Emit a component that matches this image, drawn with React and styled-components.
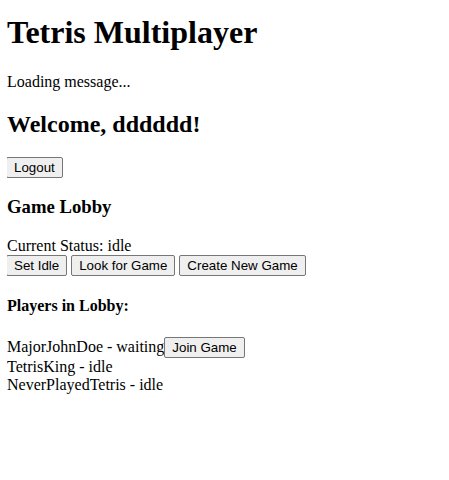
import styled, { createGlobalStyle } from "styled-components";

const GlobalStyle = createGlobalStyle`
  body {
    margin: 14px 7px 8px;
    font-family: "Liberation Serif", "Times New Roman", serif;
    font-size: 16px;
    color: #000;
    background: #fff;
  }
`;

const Title = styled.h1`
  font-size: 32px;
  font-weight: bold;
  margin: 0 0 22px;
`;

const Message = styled.p`
  margin: 16px 0;
`;

const Welcome = styled.h2`
  font-size: 24px;
  font-weight: bold;
  margin: 19.92px 0 19px;
`;

const SectionTitle = styled.h3`
  font-size: 18.72px;
  font-weight: bold;
  margin: 17.72px 0 19.72px;
`;

const SubTitle = styled.h4`
  font-size: 16px;
  font-weight: bold;
  margin: 20.28px 0 22.28px;
`;

const Button = styled.button`
  font-family: "Liberation Sans", Arial, sans-serif;
  font-size: 13.333px;
  color: #000;
  background: #efefef;
  border: 1px solid #767676;
  border-radius: 2px;
  padding: 2px 7px;
  margin: 0 0 0 ${({ $shift }) => ($shift ? "-1px" : "0")};
  line-height: normal;
`;

const ButtonRow = styled.div`
  display: block;
`;

const PlayerList = styled.ul`
  list-style: none;
  margin: 19px 0 16px;
  padding: 0;
`;

const Player = styled.li`
  line-height: normal;
`;

const players = [
  { name: "MajorJohnDoe", status: "waiting", canJoin: true },
  { name: "TetrisKing", status: "idle" },
  { name: "NeverPlayedTetris", status: "idle" },
];

export default function App() {
  return (
    <>
      <GlobalStyle />
      <Title>Tetris Multiplayer</Title>
      <Message>Loading message...</Message>
      <Welcome>Welcome, dddddd!</Welcome>
      <Button $shift>Logout</Button>
      <SectionTitle>Game Lobby</SectionTitle>
      <div>Current Status: idle</div>
      <ButtonRow>
        <Button $shift>Set Idle</Button> <Button>Look for Game</Button>{" "}
        <Button>Create New Game</Button>
      </ButtonRow>
      <SubTitle>Players in Lobby:</SubTitle>
      <PlayerList>
        {players.map((p) => (
          <Player key={p.name}>
            {p.name} - {p.status}
            {p.canJoin && <Button>Join Game</Button>}
          </Player>
        ))}
      </PlayerList>
    </>
  );
}
